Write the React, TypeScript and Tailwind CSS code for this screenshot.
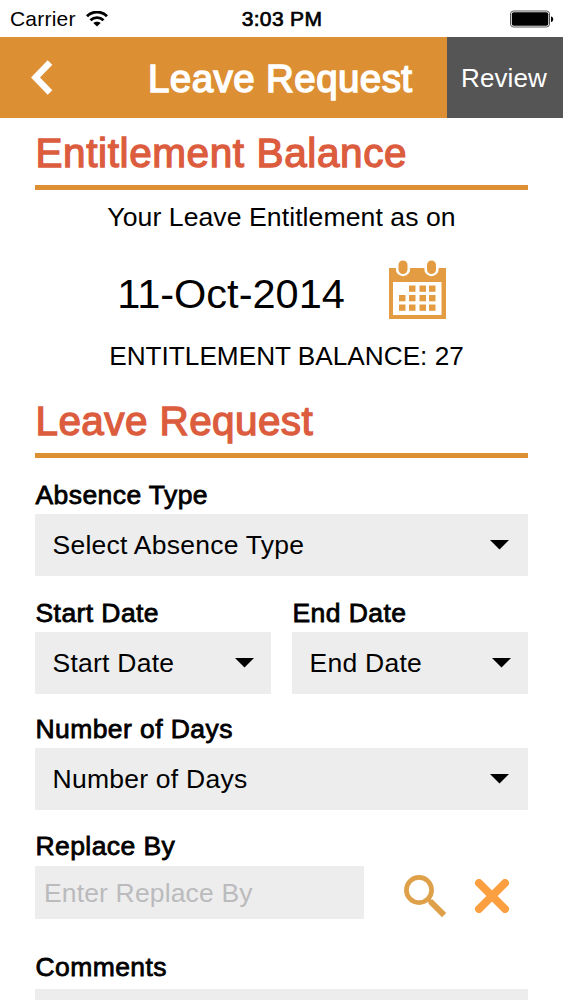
type SelectFieldProps = {
  label: string;
  placeholder: string;
  arrowClass?: string;
};

const labelClass =
  'flex h-[37px] items-center whitespace-nowrap pl-[0.5px] text-[26.5px] tracking-[0.42px] [-webkit-text-stroke:0.8px_currentColor]';

function SelectField({ label, placeholder, arrowClass = 'mr-[19px]' }: SelectFieldProps) {
  return (
    <div className="flex-1">
      <div className={labelClass}>{label}</div>
      <button
        className="flex h-[62px] w-full items-center justify-between bg-[#ededed] pl-[17.5px] text-[26.5px] tracking-[0.25px]"
        type="button"
      >
        <span className="pt-px whitespace-nowrap">{placeholder}</span>
        <svg className={`h-[10px] w-[19px] ${arrowClass}`} viewBox="0 0 19 10">
          <path d="M0 0h19L9.5 9.500z" />
        </svg>
      </button>
    </div>
  );
}

function SectionTitle({ children, spacing }: { children: string; spacing: string }) {
  return (
    <h2
      className={`flex h-[72px] items-center border-b-[5px] border-[#dd8f34] pt-[4px] pl-[0.5px] text-[40.5px] whitespace-nowrap text-[#dc5c3e] [-webkit-text-stroke:1.3px_currentColor] ${spacing}`}
    >
      {children}
    </h2>
  );
}

function WifiIcon() {
  return (
    <svg className="ml-[10px] h-4 w-[22px]" fill="none" stroke="black" strokeWidth="2.9" viewBox="0 0 22 16">
      <path d="M1 5.2C6.500-.3 15.500-.3 21 5.200" />
      <path d="M4.500 9.200C8.200 5.700 13.800 5.700 17.500 9.200" />
      <path d="M11 15.500 7.300 12C9.300 10.200 12.700 10.200 14.700 12z" fill="black" stroke="none" />
    </svg>
  );
}

function CalendarIcon() {
  const cells = [
    [20, 25.5], [30.5, 25.5], [40, 25.5],
    [10, 35], [20, 35], [30.5, 35], [40, 35],
    [10, 44.5], [20, 44.5], [30.5, 44.5], [40, 44.5],
  ];

  return (
    <svg className="-mt-[2px] h-[59px] w-[57px]" fill="#e49c42" viewBox="0 0 57 59">
      <path d="M0 8h57v51H0z" />
      <path d="M4 22h48.500v33H4z" fill="white" />
      {[14, 42.5].map((x) => (
        <g key={x}>
          <circle cx={x} cy="9" fill="white" r="7.2" />
          <rect height="13.500" rx="4.500" width="9" x={x - 4.5} y="0.500" />
        </g>
      ))}
      {cells.map(([x, y]) => (
        <rect height="6.3" key={`${x}-${y}`} width="6.500" x={x} y={y} />
      ))}
    </svg>
  );
}

export default function App() {
  return (
    <div className="h-[1000px] w-[563px] overflow-hidden bg-white font-['Liberation_Sans',Arial,sans-serif] text-black">
      <div className="grid h-[37px] grid-cols-[1fr_auto_1fr] items-center pr-[9px] pl-[10px]">
        <div className="flex items-center">
          <span className="text-[21px] tracking-[0.2px]">Carrier</span>
          <WifiIcon />
        </div>
        <span className="text-[21px] tracking-[0.35px] [-webkit-text-stroke:0.7px_currentColor]">3:03 PM</span>
        <svg className="h-[18px] w-[44px] justify-self-end" viewBox="0 0 44 18">
          <rect fill="white" height="16" rx="3" stroke="#555" width="39" x="0.500" y="1" />
          <rect height="13.500" rx="2" width="36.500" x="1.800" y="2.200" />
          <path d="M41 6.500c3 .5 3 5 0 5.500z" />
        </svg>
      </div>

      <header className="flex h-[81px] items-center bg-[#dd8f34] text-white">
        <button aria-label="Back" className="ml-[31px]" type="button">
          <svg className="h-[35px] w-[22px]" fill="none" stroke="currentColor" strokeWidth="6.500" viewBox="0 0 22 35">
            <path d="M19 2.500 4.500 17.500 19 32.500" />
          </svg>
        </button>
        <h1 className="ml-[95px] flex-1 pt-[2px] text-[38.5px] tracking-[0.42px] whitespace-nowrap [-webkit-text-stroke:1.5px_currentColor]">
          Leave Request
        </h1>
        <button className="h-full w-[116px] bg-[#555] pt-[2px] pr-[2px] text-[26px] tracking-[0.1px]" type="button">
          Review
        </button>
      </header>

      <main className="px-[35px]">
        <SectionTitle spacing="tracking-[0.6px]">Entitlement Balance</SectionTitle>
        <section className="flex h-[196px] flex-col items-center">
          <p className="mt-[12px] text-[26.6px] leading-[31px] tracking-[0.07px] whitespace-nowrap">
            Your Leave Entitlement as on
          </p>
          <div className="mt-[28px] flex h-[59px] items-center gap-[44px]">
            <span className="pt-[7px] text-[41.5px] leading-[46px] whitespace-nowrap">11-Oct-2014</span>
            <CalendarIcon />
          </div>
          <p className="mt-[21px] ml-[10px] text-[26.2px] leading-[31px] whitespace-nowrap">ENTITLEMENT BALANCE: 27</p>
        </section>
        <SectionTitle spacing="tracking-[0.4px]">Leave Request</SectionTitle>

        <form className="pt-[19px]">
          <SelectField label="Absence Type" placeholder="Select Absence Type" />
          <div className="mt-[19px] flex gap-[21px]">
            <SelectField arrowClass="mr-[17px]" label="Start Date" placeholder="Start Date" />
            <SelectField arrowClass="mr-[17px]" label="End Date" placeholder="End Date" />
          </div>
          <div className="mt-[17px]">
            <SelectField label="Number of Days" placeholder="Number of Days" />
          </div>

          <label className={`${labelClass} mt-[18px] mb-px`} htmlFor="replace-by">
            Replace By
          </label>
          <div className="flex h-[53px] items-center">
            <input
              className="h-full w-[329px] bg-[#ededed] pt-[2px] pl-[9px] text-[26.5px] tracking-[0.15px] outline-none placeholder:text-[#bbbbbd]"
              id="replace-by"
              placeholder="Enter Replace By"
            />
            <button aria-label="Search" className="mt-[7px] ml-[40px]" type="button">
              <svg className="h-[42px] w-[42px]" fill="none" stroke="#dfa04a" viewBox="0 0 42 42">
                <circle cx="15" cy="15" r="12.600" strokeWidth="4.700" />
                <path d="M24 24l4 4" strokeWidth="4" />
                <path d="M28.500 28.500 38 38" strokeLinecap="square" strokeLinejoin="round" strokeWidth="6" />
              </svg>
            </button>
            <button aria-label="Clear" className="mt-[7px] ml-[29px]" type="button">
              <svg className="h-[34px] w-[34px]" stroke="#fc9f40" strokeLinecap="round" strokeWidth="8" viewBox="0 0 34 34">
                <path d="M4 4l26 26M30 4 4 30" />
              </svg>
            </button>
          </div>

          <label className={`${labelClass} mt-[30px] mb-[3px]`} htmlFor="comments">
            Comments
          </label>
          <textarea className="block h-[80px] w-full resize-none bg-[#ededed] outline-none" id="comments" />
        </form>
      </main>
    </div>
  );
}
